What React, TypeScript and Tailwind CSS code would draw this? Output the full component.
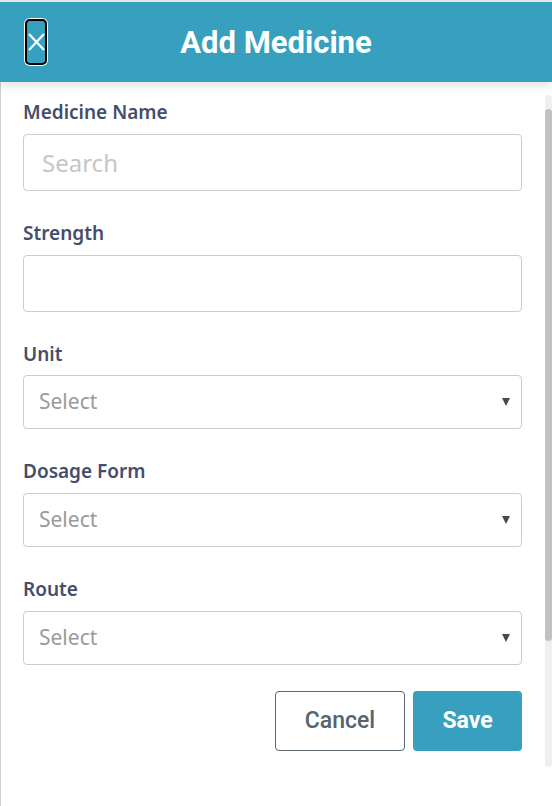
import React from "react";

type Field = { label: string; kind: "input" | "select"; placeholder?: string; tight?: boolean };

const fields: Field[] = [
  { label: "Medicine Name", kind: "input", placeholder: "Search" },
  { label: "Strength", kind: "input", placeholder: "" },
  { label: "Unit", kind: "select", tight: true },
  { label: "Dosage Form", kind: "select" },
  { label: "Route", kind: "select" },
];

function Arrow() {
  return (
    <svg width="8" height="8" viewBox="0 0 8 8" className="shrink-0">
      <polygon points="0,0 8,0 4,8" fill="#444a50" />
    </svg>
  );
}

export default function App() {
  return (
    <div className="h-[806px] w-[552px] bg-white flex flex-col border-t-2 border-[#e4e4e4] overflow-hidden">
      <header className="relative z-10 h-[80px] shrink-0 bg-[#37a0bf] grid grid-cols-[1fr_auto_1fr] items-center shadow-[0_3px_10px_rgba(0,0,0,0.13)]">
        <div className="pl-[25px] flex items-center">
          <button className="w-[22px] h-[46px] rounded-[5px] border-2 border-black shadow-[0_0_0_1px_#ffffff] flex items-center justify-center p-0">
            <svg width="17" height="18" viewBox="0 0 17 18">
              <path d="M1 1L16 17M16 1L1 17" stroke="white" strokeWidth="2.2" />
            </svg>
          </button>
        </div>
        <h1 className="text-white text-[31px] leading-none font-bold font-['Roboto',sans-serif]">
          Add Medicine
        </h1>
        <div />
      </header>
      <div className="flex-1 flex border-l border-[#cfcfcf]">
        <div className="flex-1 pl-[22px] pr-[23px] pt-[18px] flex flex-col gap-[30px]">
          {fields.map((f) => (
            <div key={f.label} className="flex flex-col">
              <label
                className={
                  f.tight
                    ? "text-[19px] leading-[24px] font-semibold text-[#454d6b] font-['Noto_Sans',sans-serif] mb-[9px]"
                    : "text-[19px] leading-[24px] font-semibold text-[#454d6b] font-['Noto_Sans',sans-serif] mb-[10px]"
                }
              >
                {f.label}
              </label>
              {f.kind === "input" ? (
                <input
                  placeholder={f.placeholder}
                  className="h-[57px] w-full rounded-[4px] border border-[#cccccc] px-[18px] text-[24px] font-['Noto_Sans',sans-serif] text-[#333] placeholder:text-[#c6c6c6] outline-none"
                />
              ) : (
                <div className="h-[54px] w-full rounded-[4px] border border-[#cccccc] pl-[15px] pr-[11px] flex items-center justify-between">
                  <span className="text-[21px] text-[#9a9a9a] font-['Noto_Sans',sans-serif]">Select</span>
                  <Arrow />
                </div>
              )}
            </div>
          ))}
          <div className="flex justify-end gap-[8px] -mt-[4px]">
            <button className="w-[130px] h-[60px] rounded-[4px] border border-[#5b6770] bg-white text-[#56636d] text-[23px] font-medium font-['Roboto',sans-serif]">
              Cancel
            </button>
            <button className="w-[109px] h-[60px] rounded-[4px] bg-[#37a0bf] text-white text-[23px] font-bold font-['Roboto',sans-serif]">
              Save
            </button>
          </div>
        </div>
        <div className="w-[7px] shrink-0 mt-[13px] h-[672px] rounded-full bg-[#efefef] flex flex-col">
          <div className="mt-[14px] h-[532px] rounded-full bg-[#c1c1c1]" />
        </div>
      </div>
    </div>
  );
}
